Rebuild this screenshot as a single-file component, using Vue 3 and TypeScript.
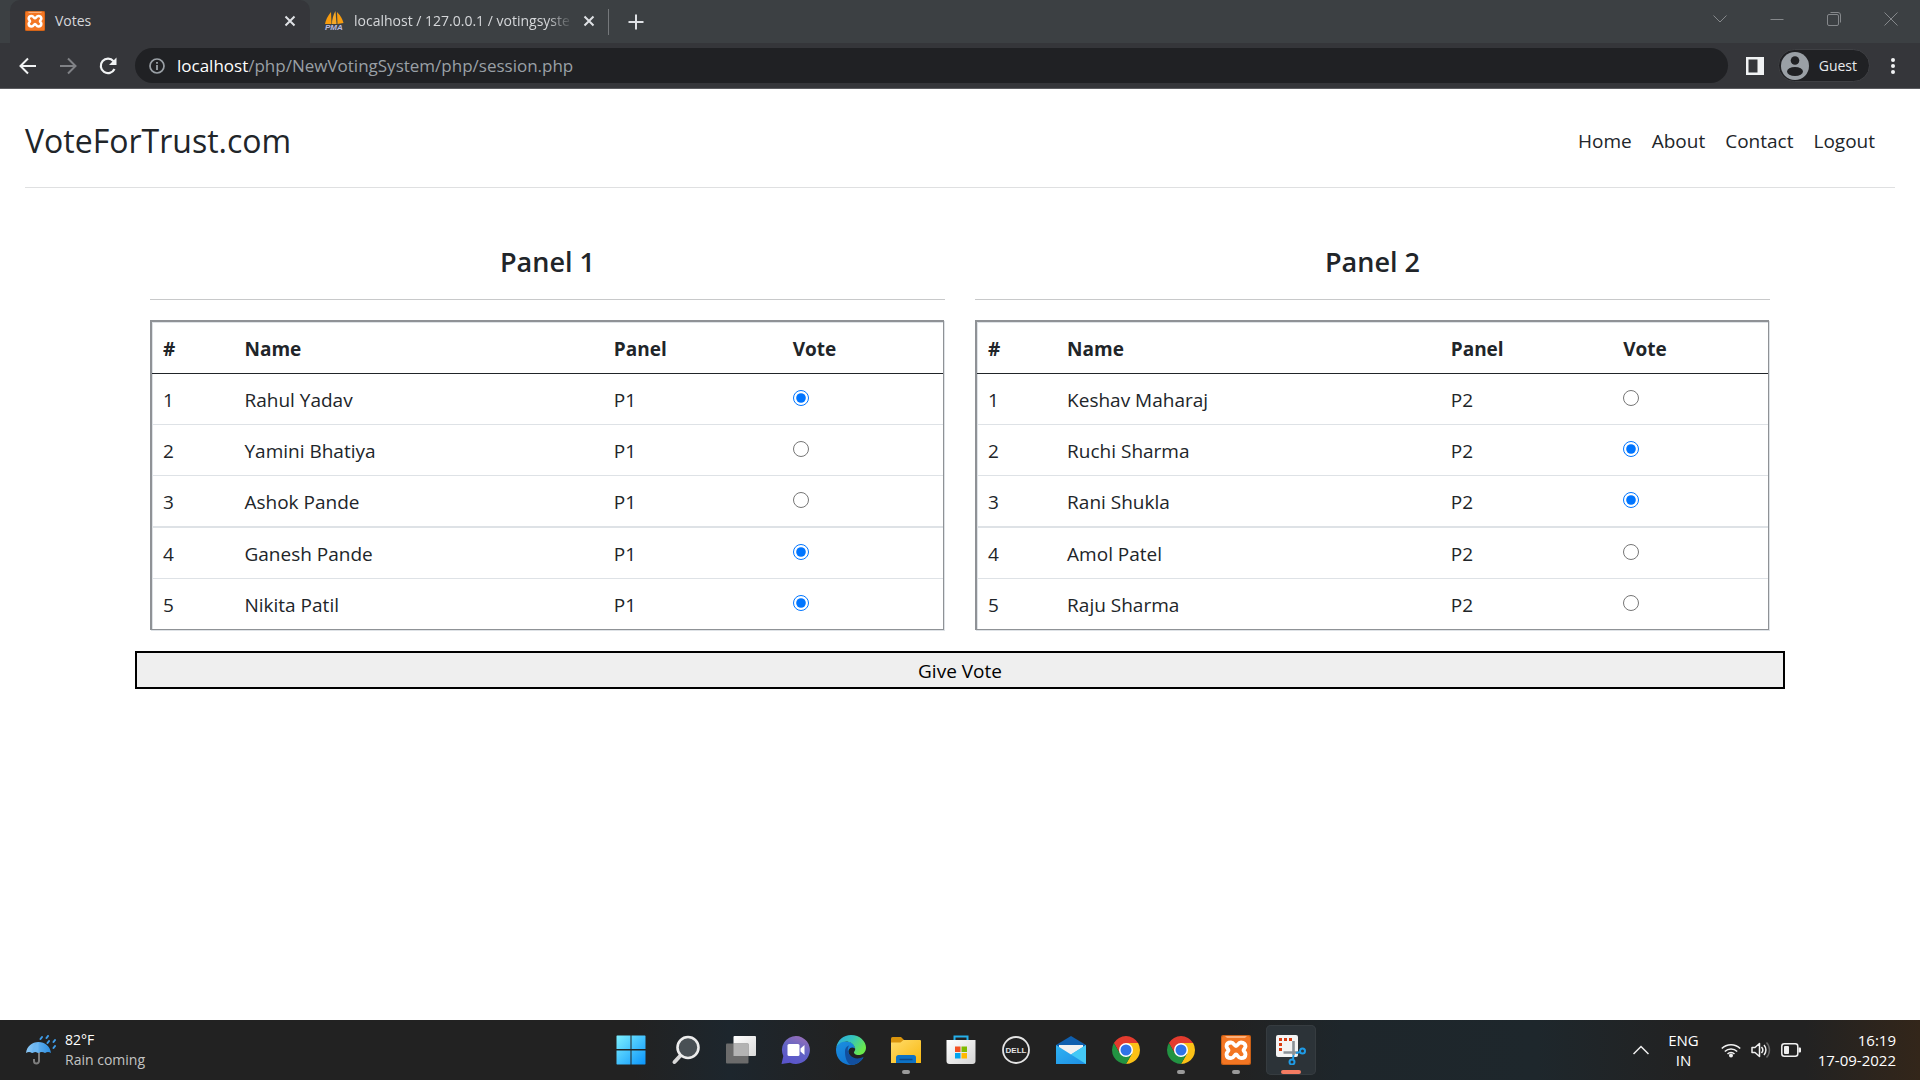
<script setup lang="ts">
import { ref } from 'vue'

interface Candidate {
  name: string
  voted: boolean
}

interface Panel {
  title: string
  code: string
  layout: string
  candidates: Candidate[]
}

const links: string[] = ['Home', 'About', 'Contact', 'Logout']

const panels = ref<Panel[]>([
  {
    title: 'Panel 1',
    code: 'P1',
    layout: 'first',
    candidates: [
      { name: 'Rahul Yadav', voted: true },
      { name: 'Yamini Bhatiya', voted: false },
      { name: 'Ashok Pande', voted: false },
      { name: 'Ganesh Pande', voted: true },
      { name: 'Nikita Patil', voted: true },
    ],
  },
  {
    title: 'Panel 2',
    code: 'P2',
    layout: 'second',
    candidates: [
      { name: 'Keshav Maharaj', voted: false },
      { name: 'Ruchi Sharma', voted: true },
      { name: 'Rani Shukla', voted: true },
      { name: 'Amol Patel', voted: false },
      { name: 'Raju Sharma', voted: false },
    ],
  },
])

interface TaskApp {
  id: string
  label: string
  state: string
}

const apps: TaskApp[] = [
  { id: 'start', label: 'Start', state: '' },
  { id: 'search', label: 'Search', state: '' },
  { id: 'views', label: 'Task view', state: '' },
  { id: 'chat', label: 'Chat', state: '' },
  { id: 'edge', label: 'Edge', state: '' },
  { id: 'files', label: 'File Explorer', state: 'open' },
  { id: 'store', label: 'Store', state: '' },
  { id: 'dell', label: 'Dell', state: '' },
  { id: 'mail', label: 'Mail', state: '' },
  { id: 'chrome', label: 'Chrome', state: '' },
  { id: 'chrome', label: 'Chrome guest', state: 'open' },
  { id: 'xampp', label: 'XAMPP', state: 'open' },
  { id: 'snip', label: 'Snipping Tool', state: 'active' },
]
</script>

<template>
  <div class="desktop">
    <svg class="defs" width="0" height="0" aria-hidden="true">
      <defs>
        <linearGradient id="g-win" x1="0" y1="0" x2="1" y2="1"><stop offset="0" stop-color="#7df0ff" /><stop offset="1" stop-color="#0a94fb" /></linearGradient>
        <linearGradient id="g-view" x1="0" y1="0" x2="1" y2="1"><stop offset="0" stop-color="#ffffff" /><stop offset="1" stop-color="#d9d9d9" /></linearGradient>
        <linearGradient id="g-chat" x1="0.8" y1="0" x2="0.4" y2="1"><stop offset="0" stop-color="#9a6fb8" /><stop offset="0.5" stop-color="#6264c4" /><stop offset="1" stop-color="#5a55cb" /></linearGradient>
        <linearGradient id="g-edge-top" x1="0" y1="0" x2="1" y2="0.5"><stop offset="0" stop-color="#2aa8e0" /><stop offset="0.5" stop-color="#35c4bd" /><stop offset="1" stop-color="#6ae94c" /></linearGradient>
        <linearGradient id="g-edge-left" x1="0" y1="0" x2="0.6" y2="1"><stop offset="0" stop-color="#1b8fe0" /><stop offset="1" stop-color="#1173cf" /></linearGradient>
        <linearGradient id="g-folder" x1="0" y1="0" x2="1" y2="1"><stop offset="0" stop-color="#ffdc6b" /><stop offset="1" stop-color="#f9b80f" /></linearGradient>
        <linearGradient id="g-store" x1="0" y1="0" x2="1" y2="1"><stop offset="0" stop-color="#ffffff" /><stop offset="1" stop-color="#d4d4d4" /></linearGradient>
        <linearGradient id="g-mail" x1="0" y1="0" x2="1" y2="1"><stop offset="0" stop-color="#2fb3f3" /><stop offset="1" stop-color="#1e8fe4" /></linearGradient>
        <linearGradient id="g-umb" x1="0" y1="0" x2="1" y2="0"><stop offset="0" stop-color="#8fcaf7" /><stop offset="1" stop-color="#2c8fe2" /></linearGradient>
        <symbol id="i-xampp" viewBox="0 0 30 30">
          <rect width="30" height="30" rx="2" fill="#c95f16" />
          <rect x="1" y="1" width="28" height="28" rx="2" fill="#f37623" />
          <path d="M4 1h22l-2 2H6z" fill="#fbb07c" />
          <path d="M10 7.500C7 7.500 5.500 9 5.500 11.300C5.500 13.200 7.500 14 7.500 15.300S5.500 17.300 5.500 19.200C5.500 21.500 7 23.200 10 23.200C13 23.200 13.300 19.500 15 19.500S17 23.200 20 23.200 24.500 21.500 24.500 19.200 22.500 16.600 22.500 15.300 24.500 13.200 24.500 11.300 23 7.500 20 7.500 16.700 11 15 11 13 7.500 10 7.500Z" fill="#f37623" stroke="#fff" stroke-width="3.800" stroke-linejoin="round" />
        </symbol>
      </defs>
    </svg>

    <header class="browser">
      <div class="tabs">
        <div class="tab active">
          <svg class="favicon" viewBox="0 0 30 30"><use href="#i-xampp" /></svg>
          <span class="tab-title">Votes</span>
          <button class="bare" aria-label="Close Votes">
            <svg width="12" height="12" viewBox="0 0 12 12"><path d="M1.500 1.500l9 9M10.500 1.500l-9 9" stroke="#dfe1e5" stroke-width="2" /></svg>
          </button>
        </div>
        <div class="tab">
          <svg class="favicon" viewBox="0 0 20 20">
            <path d="M7 1Q2 7 1 13H7.500Z" fill="#f89c0e" />
            <path d="M11.500 0Q8 6 8 13H12.500Z" fill="#f6a828" />
            <path d="M13 1Q18 6 19.500 12L13.500 13Z" fill="#f89c0e" />
            <text x="1" y="19" class="pma">PMA</text>
          </svg>
          <span class="tab-title fade">localhost / 127.0.0.1 / votingsyste</span>
          <button class="bare" aria-label="Close localhost">
            <svg width="12" height="12" viewBox="0 0 12 12"><path d="M1.500 1.500l9 9M10.500 1.500l-9 9" stroke="#dfe1e5" stroke-width="2" /></svg>
          </button>
        </div>
        <span class="tab-rule"></span>
        <button class="bare new-tab" aria-label="New tab">
          <svg width="16" height="16" viewBox="0 0 16 16"><path d="M8 0.500v15M0.500 8h15" stroke="#dfe1e5" stroke-width="2" /></svg>
        </button>
        <div class="window-controls">
          <button class="bare" aria-label="Search tabs"><svg width="14" height="14" viewBox="0 0 14 14"><path d="M0.500 3.500L7 10l6.500-6.500" fill="none" stroke="#85888b" /></svg></button>
          <button class="bare" aria-label="Minimize"><svg width="14" height="14" viewBox="0 0 14 14"><path d="M0.500 7.500h13" stroke="#85888b" /></svg></button>
          <button class="bare" aria-label="Restore"><svg width="14" height="14" viewBox="0 0 14 14"><rect x="0.500" y="2.500" width="11" height="11" rx="1.500" fill="none" stroke="#85888b" /><path d="M3.500 0.500h7.500a2.500 2.500 0 0 1 2.500 2.500v7.500" fill="none" stroke="#85888b" /></svg></button>
          <button class="bare" aria-label="Close window"><svg width="14" height="14" viewBox="0 0 14 14"><path d="M0.500 0.500l13 13M13.500 0.500l-13 13" stroke="#85888b" /></svg></button>
        </div>
      </div>

      <div class="toolbar">
        <div class="nav-buttons">
          <button class="bare" aria-label="Back"><svg width="18" height="18" viewBox="0 0 18 18"><path d="M17 9H2M9 1.500L1.500 9 9 16.500" fill="none" stroke="#f1f3f4" stroke-width="2" /></svg></button>
          <button class="bare" aria-label="Forward"><svg width="18" height="18" viewBox="0 0 18 18"><path d="M1 9h15M9 1.500L16.500 9 9 16.500" fill="none" stroke="#808286" stroke-width="2" /></svg></button>
          <button class="bare" aria-label="Reload"><svg width="18" height="18" viewBox="0 0 18 18"><path d="M15.500 12A7.200 7.200 0 1 1 14.500 4.200" fill="none" stroke="#f1f3f4" stroke-width="2.200" /><path d="M17.500 0.500v7.500H10z" fill="#f1f3f4" /></svg></button>
        </div>
        <div class="omnibox">
          <svg width="16" height="16" viewBox="0 0 16 16"><circle cx="8" cy="8" r="7" fill="none" stroke="#9aa0a6" stroke-width="1.700" /><path d="M8 7v5M8 4v1.800" stroke="#9aa0a6" stroke-width="1.800" /></svg>
          <span class="url"><b>localhost</b>/php/NewVotingSystem/php/session.php</span>
        </div>
        <button class="bare" aria-label="Side panel"><svg width="18" height="18" viewBox="0 0 18 18"><path fill-rule="evenodd" d="M0 0h18v18H0zM2.500 2.500v13h9v-13z" fill="#f1f3f4" /></svg></button>
        <button class="profile">
          <svg width="28" height="28" viewBox="0 0 28 28"><circle cx="14" cy="14" r="14" fill="#9aa0a6" /><circle cx="14" cy="8.500" r="4.300" fill="#202124" /><ellipse cx="14" cy="19.500" rx="8" ry="4.500" fill="#202124" /></svg>
          <span>Guest</span>
        </button>
        <button class="bare" aria-label="Menu"><svg width="6" height="18" viewBox="0 0 6 18"><circle cx="3" cy="3" r="2" fill="#f1f3f4" /><circle cx="3" cy="9" r="2" fill="#f1f3f4" /><circle cx="3" cy="15" r="2" fill="#f1f3f4" /></svg></button>
      </div>
    </header>

    <main class="page">
      <div class="site-header">
        <h1>VoteForTrust.com</h1>
        <nav>
          <a v-for="link in links" :key="link" href="#">{{ link }}</a>
        </nav>
      </div>

      <form class="ballot" @submit.prevent>
        <div class="panels">
          <section v-for="panel in panels" :key="panel.code" class="panel">
            <h2>{{ panel.title }}</h2>
            <table :class="panel.layout">
              <colgroup>
                <col class="c-no" />
                <col class="c-name" />
                <col class="c-panel" />
                <col />
              </colgroup>
              <thead>
                <tr>
                  <th scope="col">#</th>
                  <th scope="col">Name</th>
                  <th scope="col">Panel</th>
                  <th scope="col">Vote</th>
                </tr>
              </thead>
              <tbody>
                <tr v-for="(candidate, i) in panel.candidates" :key="candidate.name">
                  <td>{{ i + 1 }}</td>
                  <td>{{ candidate.name }}</td>
                  <td>{{ panel.code }}</td>
                  <td>
                    <input
                      type="radio"
                      :name="panel.code + '-' + i"
                      :checked="candidate.voted"
                      :aria-label="'Vote for ' + candidate.name"
                    />
                  </td>
                </tr>
              </tbody>
            </table>
          </section>
        </div>
        <button class="submit" type="submit">Give Vote</button>
      </form>
    </main>

    <footer class="taskbar">
      <div class="weather">
        <svg width="30" height="31" viewBox="0 0 30 31">
          <path d="M13 12v14a2.500 2.500 0 0 1-5 0v-2" fill="none" stroke="#7d7d7d" stroke-width="2" />
          <path d="M0 18C1 11 6 7 12.500 7S24 11 25 18q-3-2-6 0-3.300-2-6.500 0-3.200-2-6.500 0-3-2-6 0z" fill="url(#g-umb)" />
          <path d="M12.500 7q-6 4-6.500 11 3.300-2 6.500 0z" fill="#6db7f2" />
          <path d="M16 2l-1.500 2M22 1l-1.500 2M23 6l-1.500 2M29 5l-1.500 2M29 11l-1.500 2" stroke="#3f9ce8" stroke-width="2" stroke-linecap="round" />
        </svg>
        <div class="stack"><span>82°F</span><span class="dim">Rain coming</span></div>
      </div>

      <div class="apps">
        <button v-for="app in apps" :key="app.label" class="app" :class="app.state" :aria-label="app.label">
          <svg v-if="app.id === 'start'" width="30" height="30" viewBox="0 0 30 30">
            <path d="M1 0.500h13.500V14H0.500V1zM15.500 0.500h13.500l0.500 0.500v13h-14zM0.500 15.500h14v14H1l-0.500-0.500zM15.500 15.500h14v13.500l-0.500 0.500h-13.500z" fill="url(#g-win)" />
          </svg>
          <svg v-else-if="app.id === 'search'" width="30" height="30" viewBox="0 0 30 30">
            <path d="M10 20l-6.500 7" stroke="#d8d8d8" stroke-width="4" stroke-linecap="round" />
            <circle cx="17" cy="12.500" r="10.500" fill="#495055" stroke="#ececec" stroke-width="2.600" />
          </svg>
          <svg v-else-if="app.id === 'views'" width="30" height="30" viewBox="0 0 30 30">
            <rect x="7.500" y="1" width="22.500" height="20" rx="1" fill="url(#g-view)" />
            <rect x="0" y="8.500" width="22.500" height="20" rx="1" fill="#6b6b6b" />
            <rect x="7.500" y="8.500" width="15" height="12.500" fill="#b3b3b3" />
          </svg>
          <svg v-else-if="app.id === 'chat'" width="30" height="30" viewBox="0 0 30 30">
            <path d="M15 1a14 14 0 1 1-6 26.700L0.500 29l1.800-8A14 14 0 0 1 15 1z" fill="url(#g-chat)" />
            <rect x="6.500" y="9" width="12" height="12" rx="1.500" fill="#fff" />
            <path d="M19.500 13.500l4-3.500v10l-4-3.500z" fill="#fff" />
          </svg>
          <svg v-else-if="app.id === 'edge'" width="30" height="30" viewBox="0 0 30 30">
            <path d="M0 15C0 9 5 5 10 6.500c6 0 9 3.500 9 7-4-3-8 1-6 5.500 2 5 8 7 14.500 3.500C25 27 20 30 15 30 6.500 30 0 23.500 0 15z" fill="url(#g-edge-left)" />
            <path d="M9 17c0-4 2-6 4-6.500-2 3-1.500 7 1 9.500 3 3.500 8 4.500 13.500 2-2.500 5-8 8-12.500 8-4-1.500-6-7-6-13z" fill="#124f9e" />
            <path d="M0.300 12.500C1.500 5 7.500 0 15 0c9 0 15 6.500 15 12.500 0 5-3.500 7.500-7.500 7.500-3 0-5-1.500-4.500-3 1-1.200 1.500-2.500 1-4C18 8.500 13.500 6.500 10 6.500c-5 0-8.500 3-9.700 6z" fill="url(#g-edge-top)" />
          </svg>
          <svg v-else-if="app.id === 'files'" width="30" height="30" viewBox="0 0 30 30">
            <path d="M0 3.500q0-1.500 1.500-1.500H10l3 3v4H0z" fill="#d9940d" />
            <path d="M0 7.500h9.500l3-2.500H29q1 0 1 1v22H0z" fill="url(#g-folder)" />
            <path d="M5 28v-5.500q0-2.500 2.500-2.500h15q2.500 0 2.500 2.500V28z" fill="#0d72c5" />
            <path d="M8.500 24.500h13" stroke="#0a4b8c" stroke-width="1.500" />
          </svg>
          <svg v-else-if="app.id === 'store'" width="30" height="30" viewBox="0 0 30 30">
            <path d="M8.500 6V1.500h13V6" fill="none" stroke="#25b0ea" stroke-width="2" />
            <path d="M0.500 5h29v21q0 3-3 3h-23q-3 0-3-3z" fill="url(#g-store)" />
            <path d="M9 11.500h5.500v5.500H9z" fill="#f25022" /><path d="M15.500 11.500H21v5.500h-5.500z" fill="#7fba00" />
            <path d="M9 18h5.500v5.500H9z" fill="#00a4ef" /><path d="M15.500 18H21v5.500h-5.500z" fill="#ffb900" />
          </svg>
          <svg v-else-if="app.id === 'dell'" width="30" height="30" viewBox="0 0 30 30">
            <circle cx="15" cy="15" r="13" fill="none" stroke="#e4e4e4" stroke-width="1.800" />
            <text x="15" y="18" text-anchor="middle" class="dell">DELL</text>
          </svg>
          <svg v-else-if="app.id === 'mail'" width="30" height="30" viewBox="0 0 30 30">
            <path d="M0 10L15 1l15 9v2H0z" fill="#0f5fae" />
            <path d="M3 10h24v12H3z" fill="#f1f1f1" />
            <path d="M0 10l15 9.500L30 10v19H0z" fill="url(#g-mail)" />
            <path d="M30 10v19L15 19.500z" fill="#44c9f6" />
          </svg>
          <svg v-else-if="app.id === 'chrome'" width="30" height="30" viewBox="0 0 30 30">
            <path d="M2.880 8A14 14 0 0 1 27.120 8H15L8.940 18.500z" fill="#e33b2e" />
            <path d="M27.120 8A14 14 0 0 1 15 29l6.060-10.500L15 8z" fill="#fbc116" />
            <path d="M15 29A14 14 0 0 1 2.880 8l6.060 10.500h12.120z" fill="#229342" />
            <circle cx="15" cy="15" r="7" fill="#fff" />
            <circle cx="15" cy="15" r="5.500" fill="#2f73e8" />
          </svg>
          <svg v-else-if="app.id === 'xampp'" width="30" height="30" viewBox="0 0 30 30"><use href="#i-xampp" /></svg>
          <svg v-else width="30" height="30" viewBox="0 0 30 30">
            <rect x="0" y="0" width="22" height="22" rx="2" fill="#f4f4f4" />
            <path d="M3 3h3v3H3zM8 3h3v3H8zM13 3h3v3h-3zM3 8h3v3H3zM3 13h3v3H3z" fill="#d83b10" />
            <path d="M17.500 6v14M7.500 17.500H22" stroke="#8b9197" stroke-width="2.600" />
            <circle cx="26.500" cy="16" r="2.500" fill="none" stroke="#1f9be6" stroke-width="2" />
            <circle cx="16" cy="27" r="2.500" fill="none" stroke="#1f9be6" stroke-width="2" />
            <path d="M20 18l4.500-1M17.500 20l-0.500 4.500" stroke="#1f9be6" stroke-width="2" />
          </svg>
        </button>
      </div>

      <div class="tray">
        <svg width="16" height="10" viewBox="0 0 16 10"><path d="M0.500 9L8 1.500 15.500 9" fill="none" stroke="#f0f0f0" stroke-width="1.500" /></svg>
        <div class="stack center"><span>ENG</span><span>IN</span></div>
        <div class="status">
          <svg width="20" height="16" viewBox="0 0 20 16"><path d="M0.800 6.500a13 13 0 0 1 18.400 0M3.800 9.500a8.800 8.800 0 0 1 12.400 0M6.500 12a5 5 0 0 1 7 0" fill="none" stroke="#f0f0f0" stroke-width="1.600" /><circle cx="10" cy="13.500" r="2" fill="#f0f0f0" /></svg>
          <svg width="20" height="16" viewBox="0 0 20 16"><path d="M1 5.500h3L8.500 1.500v13L4 10.500H1z" fill="none" stroke="#f0f0f0" stroke-width="1.500" stroke-linejoin="round" /><path d="M10.500 5a4.500 4.500 0 0 1 0 6M13 3a7.500 7.500 0 0 1 0 10" fill="none" stroke="#f0f0f0" stroke-width="1.500" /><path d="M15.500 0.500a11 11 0 0 1 0 15" fill="none" stroke="#666" stroke-width="1.500" /></svg>
          <svg width="20" height="14" viewBox="0 0 20 14"><rect x="0.800" y="0.800" width="16" height="12.400" rx="2.500" fill="none" stroke="#f0f0f0" stroke-width="1.500" /><rect x="3" y="3" width="5" height="8" rx="1" fill="#f0f0f0" /><path d="M17.500 4.500h1.500q1 0 1 1v3q0 1-1 1h-1.500z" fill="#f0f0f0" /></svg>
        </div>
        <div class="stack right"><span>16:19</span><span>17-09-2022</span></div>
      </div>
    </footer>
  </div>
</template>

<style>
body {
  margin: 0;
  background: #fff;
}
</style>

<style scoped>
.desktop {
  display: flex;
  flex-direction: column;
  min-height: 100vh;
  font-family: "Open Sans", "Noto Sans", sans-serif;
  color: #212529;
}
.desktop *,
.desktop *::before,
.desktop *::after {
  box-sizing: border-box;
}
svg {
  display: block;
  flex: none;
}
.defs {
  position: absolute;
}
button {
  font: inherit;
  color: inherit;
}
.bare {
  display: flex;
  padding: 0;
  border: 0;
  background: none;
}

/* Browser frame */
.browser {
  background: #35363a;
  border-bottom: 1px solid #5b5c60;
  color: #e8eaed;
}
.tabs {
  display: flex;
  align-items: center;
  height: 43px;
  padding-left: 10px;
  background: #3c4043;
}
.tab {
  display: flex;
  align-items: center;
  gap: 10px;
  width: 297px;
  height: 43px;
  padding: 0 12px 2px 14px;
  font-size: 14px;
}
.tab.active {
  width: 300px;
  padding: 0 14px 2px 15px;
  border-radius: 10px 10px 0 0;
  background: #35363a;
}
.favicon {
  width: 20px;
  height: 20px;
}
.pma {
  font: italic 700 8px "Liberation Sans", sans-serif;
  fill: #b9bbe0;
}
.tab-title {
  flex: 1;
  white-space: nowrap;
  color: #d5d7da;
}
.fade {
  mask-image: linear-gradient(90deg, #000 88%, transparent);
}
.tab-rule {
  width: 1px;
  height: 26px;
  margin-left: 1px;
  background: #75787b;
}
.new-tab {
  margin-left: 19px;
}
.window-controls {
  display: flex;
  gap: 43px;
  margin: 0 22px 6px auto;
}
.toolbar {
  display: flex;
  align-items: center;
  height: 45px;
  padding: 0 24px 0 19px;
}
.nav-buttons {
  display: flex;
  gap: 22px;
  margin-right: 18px;
}
.omnibox {
  display: flex;
  flex: 1;
  align-items: center;
  gap: 12px;
  height: 35px;
  margin-right: 18px;
  padding: 0 14px;
  border-radius: 18px;
  background: #202124;
}
.url {
  font-size: 17px;
  color: #9aa0a6;
}
.url b {
  font-weight: 400;
  color: #fff;
}
.profile {
  display: flex;
  align-items: center;
  gap: 10px;
  height: 33px;
  margin: 0 20px 0 14px;
  padding: 0 12px 0 2px;
  border: 1px solid #3f4044;
  border-radius: 17px;
  background: #202124;
  font-size: 14px;
}

/* Voting page */
.page {
  flex: 1;
  padding: 0 25px;
}
.site-header {
  display: flex;
  align-items: center;
  justify-content: space-between;
  height: 99px;
  padding: 6px 20px 0 0;
  border-bottom: 1px solid #dfe0e1;
}
h1 {
  margin: 0;
  font-size: 32px;
  line-height: 42px;
  font-weight: 400;
}
nav {
  display: flex;
  gap: 20px;
  font-size: 19px;
}
nav a {
  color: inherit;
  text-decoration: none;
}
.ballot {
  margin: 50px 110px 0;
  font-size: 19px;
}
.panels {
  display: flex;
  gap: 30px;
  padding: 0 15px;
}
.panel {
  flex: 1;
}
h2 {
  margin: 0 0 20px;
  padding: 6px 0 19px;
  border-bottom: 1px solid #c8c9ca;
  font-size: 27px;
  line-height: 36px;
  font-weight: 600;
  text-align: center;
}
table {
  width: calc(100% - 1px);
  table-layout: fixed;
  border-collapse: separate;
  border-spacing: 0;
  border: solid #8f9296;
  border-width: 2px 1px 1px 2px;
  box-shadow: inset 1px 1px 0 #dee2e6, 1px 1px 0 #dee2e6;
}
.first .c-no {
  width: 10.3%;
}
.first .c-name {
  width: 46.7%;
}
.first .c-panel {
  width: 22.6%;
}
.second .c-no {
  width: 10%;
}
.second .c-name {
  width: 48.5%;
}
.second .c-panel {
  width: 21.8%;
}
th,
td {
  height: 51px;
  padding: 1px 10px 0 11px;
  border-bottom: 1px solid #dee2e6;
  text-align: left;
  line-height: 30px;
}
th {
  height: 52px;
  padding-top: 2px;
  border-bottom-color: #212529;
  font-weight: 700;
}
tbody tr:nth-child(3) td {
  height: 52px;
  border-bottom-width: 2px;
}
tbody tr:last-child td {
  height: 50px;
  border-bottom: 0;
}
input[type="radio"] {
  display: block;
  width: 16px;
  height: 16px;
  margin: 0 0 3px;
}
.submit {
  display: block;
  width: 100%;
  height: 38px;
  margin-top: 21px;
  padding: 1px 0 0;
  border: 2px solid #000;
  background: #efefef;
  color: #000;
}

/* Taskbar */
.taskbar {
  display: grid;
  grid-template-columns: 1fr auto 1fr;
  align-items: center;
  height: 60px;
  padding: 0 24px 0 26px;
  background: linear-gradient(90deg, #222 0 33%, #1d262d 38%, #222 44% 64%, #1e262b 70%, #1e272c 80%, #222 88% 94%, #33261a);
  color: #fff;
  font-size: 14px;
  line-height: 20px;
}
.weather {
  display: flex;
  align-items: center;
  gap: 9px;
}
.stack {
  display: flex;
  flex-direction: column;
}
.dim {
  color: #c4c4c4;
}
.apps {
  display: flex;
  gap: 5px;
}
.app {
  position: relative;
  display: flex;
  align-items: center;
  justify-content: center;
  width: 50px;
  height: 50px;
  padding: 0;
  border: 0;
  border-radius: 5px;
  background: none;
}
.app.active {
  background: #2c3338;
  box-shadow: inset 0 0 0 1px #363c40;
}
.app.open::after,
.app.active::after {
  content: "";
  position: absolute;
  bottom: 1px;
  left: 50%;
  width: 8px;
  height: 4px;
  border-radius: 2px;
  background: #9a9a9a;
  transform: translateX(-50%);
}
.app.active::after {
  width: 20px;
  background: #f47c62;
}
.dell {
  font: 700 8px "Liberation Sans", sans-serif;
  fill: #e4e4e4;
}
.tray {
  display: flex;
  align-items: center;
  justify-content: flex-end;
  font-size: 15px;
}
.center {
  margin: 0 22px 0 19px;
  text-align: center;
}
.status {
  display: flex;
  align-items: center;
  gap: 10px;
  margin-right: 17px;
}
.right {
  text-align: right;
}
</style>
